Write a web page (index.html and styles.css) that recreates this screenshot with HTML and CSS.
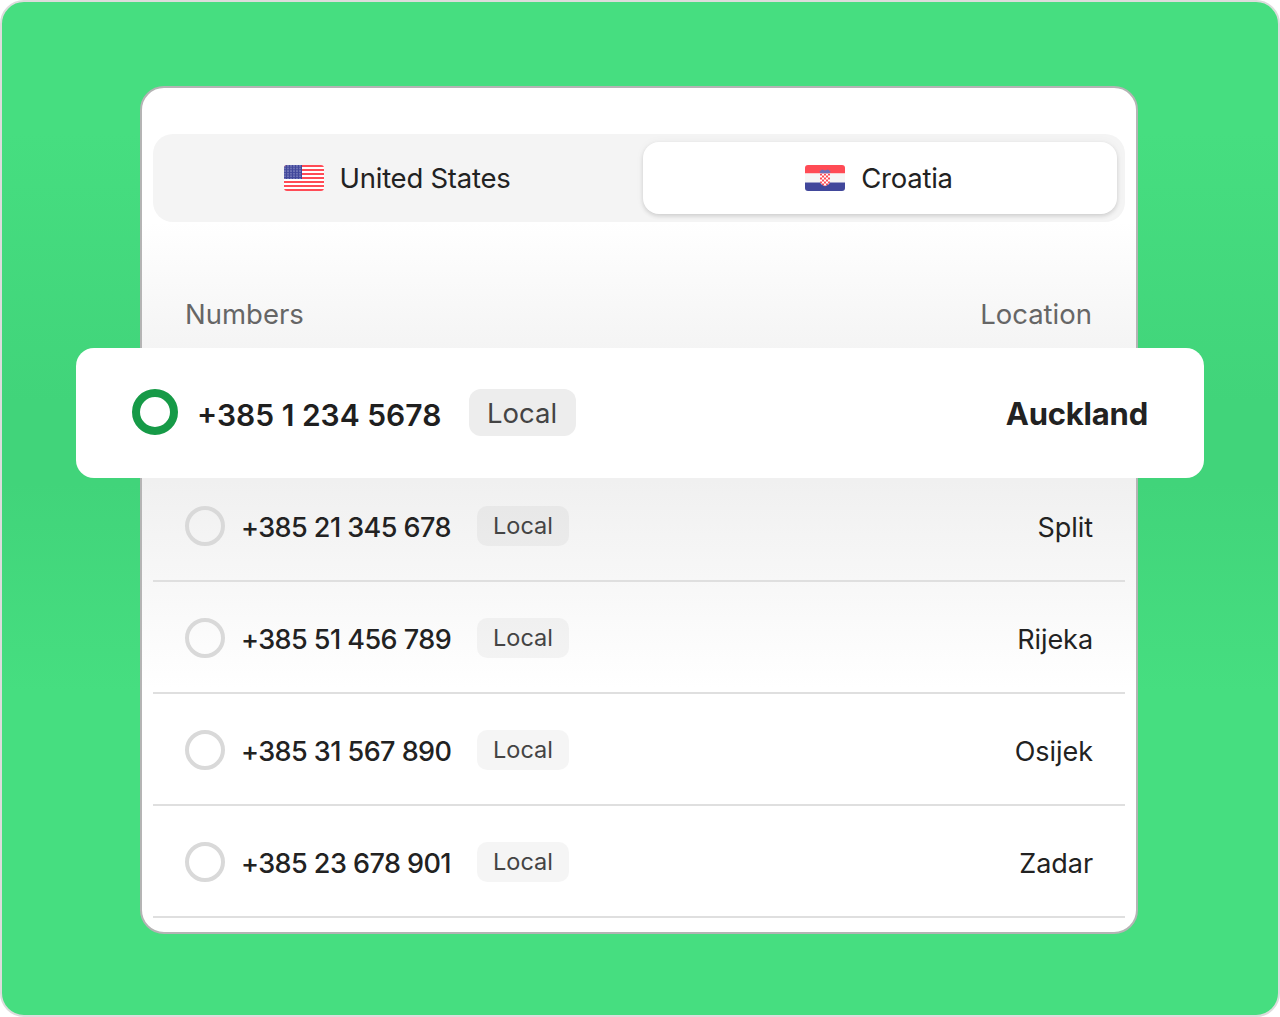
FILE: index.html
```html
<!DOCTYPE html>
<html lang="en">
<head>
<meta charset="utf-8">
<title>Numbers</title>
<link rel="stylesheet" href="styles.css">
</head>
<body>
<main class="stage">
  <section class="card">
    <div class="tabs">
      <div class="tab">
        <svg class="flag" viewBox="0 0 40 26" aria-hidden="true">
          <defs>
            <clipPath id="usclip"><rect width="40" height="26" rx="3"/></clipPath>
            <pattern id="stars" width="3" height="2.6" patternUnits="userSpaceOnUse"><rect width="3" height="2.6" fill="#41479b"/><circle cx="1" cy="0.9" r="0.6" fill="#c9cbe8"/></pattern>
          </defs>
          <g clip-path="url(#usclip)">
            <rect width="40" height="26" fill="#fff"/>
            <path class="us-stripes" d="M0 1h40M0 5h40M0 9h40M0 13h40M0 17h40M0 21h40M0 25h40"/>
            <rect width="18" height="14" fill="url(#stars)"/>
          </g>
        </svg>
        <span>United States</span>
      </div>
      <div class="tab tab-active">
        <svg class="flag" viewBox="0 0 40 26" aria-hidden="true">
          <defs>
            <clipPath id="hrclip"><rect width="40" height="26" rx="3"/></clipPath>
            <pattern id="checks" x="15" y="8.500" width="4" height="4" patternUnits="userSpaceOnUse"><rect width="4" height="4" fill="#fff"/><rect width="2" height="2" fill="#ff4b55"/><rect x="2" y="2" width="2" height="2" fill="#ff4b55"/></pattern>
          </defs>
          <g clip-path="url(#hrclip)">
            <rect width="40" height="8.500" fill="#ff4b55"/>
            <rect y="8.500" width="40" height="9" fill="#f5f5f5"/>
            <rect y="17.500" width="40" height="8.500" fill="#41479b"/>
            <path d="M14.500 6.500l2.500-2 3 1 3-1 2.500 2-1 2h-9z" fill="#6a6fb8"/>
            <path d="M15 8.500h10v8c0 2.500-2.800 4-5 4.800-2.200-.8-5-2.300-5-4.800z" fill="url(#checks)"/>
          </g>
        </svg>
        <span>Croatia</span>
      </div>
    </div>

    <div class="list-head">
      <span>Numbers</span>
      <span>Location</span>
    </div>

    <div class="row row-selected">
      <span class="radio radio-on"></span>
      <span class="number">+385 1 234 5678</span>
      <span class="tag">Local</span>
      <span class="place">Auckland</span>
    </div>

    <div class="row">
      <span class="radio"></span>
      <span class="number">+385 21 345 678</span>
      <span class="tag">Local</span>
      <span class="place">Split</span>
    </div>
    <div class="row">
      <span class="radio"></span>
      <span class="number">+385 51 456 789</span>
      <span class="tag">Local</span>
      <span class="place">Rijeka</span>
    </div>
    <div class="row">
      <span class="radio"></span>
      <span class="number">+385 31 567 890</span>
      <span class="tag">Local</span>
      <span class="place">Osijek</span>
    </div>
    <div class="row">
      <span class="radio"></span>
      <span class="number">+385 23 678 901</span>
      <span class="tag">Local</span>
      <span class="place">Zadar</span>
    </div>
  </section>
</main>
</body>
</html>
```
FILE: styles.css
```css
* { box-sizing: border-box; }
html, body { margin: 0; padding: 0; }
body {
  width: 1280px;
  height: 1017px;
  background: #fff;
  font-family: Inter, "Liberation Sans", sans-serif;
  color: #222;
}
.stage {
  width: 1280px;
  height: 1017px;
  padding: 84px 140px 0 138px;
  background: linear-gradient(180deg, #46de80 130px, #41d47a 400px, #41d47a 480px, #46de80 690px);
  border: 2px solid #dcdcdc;
  border-radius: 24px;
}
.card {
  width: 998px;
  height: 848px;
  padding: 46px 11px 0;
  border: 2px solid #b4b4b4;
  border-radius: 24px;
  background: linear-gradient(180deg, #fff 134px, #f0f0f0 310px, #f0f0f0 392px, #fff 600px);
}
.tabs {
  display: flex;
  gap: 8px;
  height: 88px;
  padding: 8px;
  border-radius: 20px;
  background: #f4f4f4;
}
.tab {
  flex: 1;
  display: flex;
  align-items: center;
  justify-content: center;
  gap: 16px;
  padding-right: 2px;
  border-radius: 16px;
  font-size: 27.500px;
  font-weight: 400;
  letter-spacing: -0.25px;
}
.tab-active {
  background: #fff;
  box-shadow: 0 2px 4px rgba(0, 0, 0, 0.14), 0 0 10px rgba(0, 0, 0, 0.04);
}
.flag { width: 40px; height: 26px; display: block; }
.us-stripes { stroke: #ff4b55; stroke-width: 2; fill: none; }
.list-head {
  display: flex;
  justify-content: space-between;
  padding: 76px 33px 17px 32px;
  font-size: 27.500px;
  line-height: 33px;
  color: #666;
  font-weight: 400;
}
.row {
  display: flex;
  align-items: center;
  height: 112px;
  padding: 2px 32px 0;
  border-bottom: 2px solid #dfdfdf;
  font-size: 27px;
}
.radio {
  flex: none;
  width: 40px;
  height: 40px;
  border: 4px solid #d9d9d9;
  border-radius: 50%;
}
.number {
  margin: 2px 0 0 16px;
  width: 236px;
  font-weight: 500;
  letter-spacing: -0.55px;
  line-height: 1;
}
.tag {
  padding: 0 16px;
  height: 40px;
  line-height: 40px;
  border-radius: 10px;
  background: rgba(0, 0, 0, 0.04);
  color: #444;
  font-size: 23.500px;
  font-weight: 400;
}
.place {
  margin: 2px 0 0 auto;
  line-height: 1;
  letter-spacing: -0.05px;
}
.row-selected {
  position: relative;
  z-index: 1;
  margin: 0 -79px -8px -77px;
  height: 130px;
  padding: 0 56px;
  background: #fff;
  border: 0;
  border-radius: 18px;
}
.row-selected .radio {
  width: 46px;
  height: 46px;
  border: 8px solid #169a47;
  margin-top: -2px;
}
.row-selected .number {
  margin: 4px 0 0 19px;
  width: 272px;
  font-size: 30px;
  font-weight: 600;
  letter-spacing: 0;
  color: #1f1f1f;
}
.row-selected .tag {
  padding: 0 18px 0 18px;
  min-width: 107px;
  height: 47px;
  line-height: 49px;
  border-radius: 12px;
  background: #ededed;
  font-size: 27.500px;
  font-weight: 400;
  margin-top: -2px;
}
.row-selected .place {
  margin-top: 0;
  font-size: 31px;
  font-weight: 700;
  letter-spacing: -0.2px;
}
```
